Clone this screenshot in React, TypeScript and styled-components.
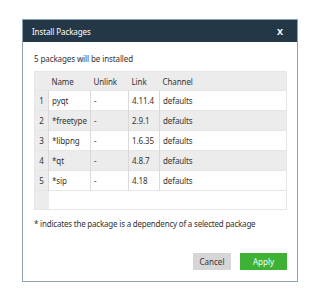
import * as React from 'react'
import styled, { createGlobalStyle } from 'styled-components'

const Global = createGlobalStyle`
  html, body {
    margin: 0;
    padding: 0;
    background: #ffffff;
    font-family: "Noto Sans", "Open Sans", sans-serif;
  }
`

const Page = styled.div`
  width: 320px;
  height: 307px;
  padding: 19px 0 0 22px;
  box-sizing: border-box;
`

const Dialog = styled.div`
  width: 276px;
  height: 263px;
  box-sizing: border-box;
  border: 1px solid #8da2b5;
  background: #fff;
  display: flex;
  flex-direction: column;
`

const Header = styled.div`
  height: 22px;
  background: #243746;
  color: #fff;
  display: flex;
  align-items: center;
  justify-content: space-between;
  padding: 0 14px 0 9px;
  font-size: 8px;
  letter-spacing: -0.1px;
`

const Close = styled.span`
  font-size: 9px;
  font-weight: 700;
`

const Body = styled.div`
  padding: 10px 10px 0 11px;
  display: flex;
  flex-direction: column;
  flex: 1;
`

const Intro = styled.div`
  font-size: 8px;
  letter-spacing: -0.1px;
  color: #333;
  height: 19px;
  line-height: 14px;
`

const Table = styled.table`
  width: 252px;
  border-collapse: collapse;
  border: 1px solid #e6e6e6;
  font-size: 8px;
  letter-spacing: -0.1px;
  color: #333;
  table-layout: fixed;
`

const Th = styled.th<{ $w: number }>`
  width: ${p => p.$w}px;
  height: 19px;
  padding: 0 0 0 3px;
  background: #ececec;
  font-weight: 400;
  text-align: left;
  box-sizing: border-box;
`

const Tr = styled.tr<{ $alt?: boolean }>`
  background: ${p => (p.$alt ? '#ececec' : '#ffffff')};
`

const Idx = styled.td<{ $h?: number }>`
  height: ${p => p.$h ?? 19}px;
  padding: 0;
  background: #ececec;
  text-align: center;
  border-top: 1px solid #e6e6e6;
`

const Td = styled.td`
  height: 19px;
  padding: 0 0 0 3px;
  border-top: 1px solid #e6e6e6;
  border-left: 1px solid #dadada;
  white-space: nowrap;
  overflow: hidden;
`

const Filler = styled.td`
  padding: 0;
  border-top: 1px solid #e6e6e6;
`

const Note = styled.div`
  margin-top: 8px;
  font-size: 8px;
  letter-spacing: -0.2px;
  color: #333;
  white-space: nowrap;
`

const Footer = styled.div`
  margin-top: auto;
  display: flex;
  justify-content: flex-end;
  gap: 9px;
  padding-bottom: 11px;
`

const Button = styled.button<{ $primary?: boolean }>`
  height: 17px;
  padding: 0;
  width: ${p => (p.$primary ? 47 : 38)}px;
  border: none;
  border-radius: 0;
  font-family: inherit;
  font-size: 8px;
  color: ${p => (p.$primary ? '#fff' : '#333')};
  background: ${p => (p.$primary ? '#3db234' : '#d6d6d6')};
`

const rows = [
  ['pyqt', '-', '4.11.4', 'defaults'],
  ['*freetype', '-', '2.9.1', 'defaults'],
  ['*libpng', '-', '1.6.35', 'defaults'],
  ['*qt', '-', '4.8.7', 'defaults'],
  ['*sip', '-', '4.18', 'defaults'],
]

export default function App() {
  return (
    <Page>
      <Global />
      <Dialog>
        <Header>
          <span>Install Packages</span>
          <Close>X</Close>
        </Header>
        <Body>
          <Intro>5 packages will be installed</Intro>
          <Table>
            <thead>
              <tr>
                <Th $w={14} />
                <Th $w={42}>Name</Th>
                <Th $w={38}>Unlink</Th>
                <Th $w={31}>Link</Th>
                <Th $w={127}>Channel</Th>
              </tr>
            </thead>
            <tbody>
              {rows.map((r, i) => (
                <Tr key={r[0]} $alt={i % 2 === 1}>
                  <Idx>{i + 1}</Idx>
                  {r.map((c, j) => (
                    <Td key={j}>{c}</Td>
                  ))}
                </Tr>
              ))}
              <Tr>
                <Idx $h={18} />
                <Filler colSpan={4} />
              </Tr>
            </tbody>
          </Table>
          <Note>* indicates the package is a dependency of a selected package</Note>
          <Footer>
            <Button>Cancel</Button>
            <Button $primary>Apply</Button>
          </Footer>
        </Body>
      </Dialog>
    </Page>
  )
}
